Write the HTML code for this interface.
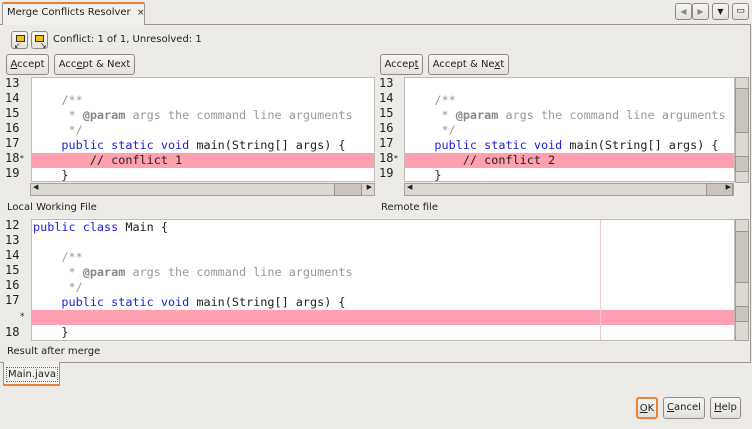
<!DOCTYPE html>
<html><head><meta charset="utf-8"><style>
*{margin:0;padding:0;box-sizing:border-box}
body{width:752px;height:429px;background:#edebe7;font-family:"DejaVu Sans","Liberation Sans",sans-serif;font-size:10px;color:#222;position:relative;overflow:hidden}
.a{position:absolute}
.btn{position:absolute;border:1px solid #8f8b84;border-radius:3px;background:linear-gradient(#f7f6f4,#e4e1dc);font-size:10px;text-align:center;line-height:19px;height:21px}
.ln{position:absolute;font-family:"DejaVu Sans Mono","Liberation Mono",monospace;font-size:12px;color:#222;line-height:15px}
.code{position:absolute;background:#fff;font-family:"DejaVu Sans Mono","Liberation Mono",monospace;font-size:11.8px;line-height:15px;white-space:pre;overflow:hidden}
.code div{height:15px;padding-left:1px}
.c{color:#999}.k{color:#2020e0}.b{font-weight:bold;color:#888}
.hl{background:#fea0b0}
.hs{position:absolute;height:13px;background:#dcd9d4;border:1px solid #a9a59e}
.vs{position:absolute;width:14px;background:#dcd9d4;border:1px solid #a9a59e}
.th{position:absolute;background:#c9c5be;border:1px solid #9b978f}
u{text-decoration:underline}
</style></head><body>
<div class="a" style="left:0;top:24px;width:751px;height:339px;border:1px solid #9c988f;border-left:none"></div>
<div class="a" style="left:2px;top:2px;width:143px;height:23px;background:#f2f0ed;border:1px solid #9c988f;border-bottom:none;border-top:2px solid #e9823a;border-radius:2px 2px 0 0"></div>
<div class="a" style="left:7px;top:7px">Merge Conflicts Resolver&nbsp;&nbsp;<span style="font-size:9px">×</span></div>
<div class="btn" style="left:675px;top:3px;width:17px;height:17px;line-height:15px;font-size:8px;color:#888">◀</div>
<div class="btn" style="left:692px;top:3px;width:17px;height:17px;line-height:15px;font-size:8px;color:#888">▶</div>
<div class="btn" style="left:712px;top:3px;width:17px;height:17px;line-height:15px;font-size:8px">▼</div>
<div class="btn" style="left:732px;top:3px;width:17px;height:17px;line-height:15px;font-size:9px">▭</div>
<div class="btn" style="left:11px;top:31px;width:17px;height:18px"><div class="a" style="left:4px;top:3px;width:9px;height:7px;border:1px solid #333;background:#f0c020"></div><div class="a" style="left:2px;top:11px;font-size:8px;line-height:6px">↙</div></div>
<div class="btn" style="left:31px;top:31px;width:17px;height:18px"><div class="a" style="left:3px;top:3px;width:9px;height:7px;border:1px solid #333;background:#f0c020"></div><div class="a" style="left:8px;top:11px;font-size:8px;line-height:6px">↘</div></div>
<div class="a" style="left:53px;top:34px">Conflict: 1 of 1, Unresolved: 1</div>
<div class="btn" style="left:6px;top:54px;width:43px"><u>A</u>ccept</div>
<div class="btn" style="left:54px;top:54px;width:81px">Acc<u>e</u>pt &amp; Next</div>
<div class="btn" style="left:380px;top:54px;width:43px">Accep<u>t</u></div>
<div class="btn" style="left:428px;top:54px;width:81px">Accept &amp; Ne<u>x</u>t</div>
<div class="ln" style="left:5px;top:76px">13<br>14<br>15<br>16<br>17<br>18<span style="font-size:8px;vertical-align:top">*</span><br>19</div>
<div class="code" style="left:31px;top:77px;width:344px;height:105px;border:1px solid #c0bcb5"><div></div><div class="c">    /**</div><div class="c">     * <span class="b">@param</span> args the command line arguments</div><div class="c">     */</div><div>    <span class="k">public static void</span> main(String[] args) {</div><div class="hl">        // conflict 1</div><div>    }</div></div>
<div class="hs" style="left:30px;top:183px;width:345px"><div class="th" style="left:303px;top:-1px;width:28px;height:13px"></div><div class="a" style="left:2px;top:-1px;font-size:7px">◀</div><div class="a" style="right:2px;top:-1px;font-size:7px">▶</div></div>
<div class="ln" style="left:379px;top:76px">13<br>14<br>15<br>16<br>17<br>18<span style="font-size:8px;vertical-align:top">*</span><br>19</div>
<div class="code" style="left:404px;top:77px;width:331px;height:105px;border:1px solid #c0bcb5"><div></div><div class="c">    /**</div><div class="c">     * <span class="b">@param</span> args the command line arguments</div><div class="c">     */</div><div>    <span class="k">public static void</span> main(String[] args) {</div><div class="hl">        // conflict 2</div><div>    }</div></div>
<div class="vs" style="left:735px;top:77px;height:106px"><div class="th" style="left:-1px;top:10px;width:14px;height:45px"></div><div class="th" style="left:-1px;top:78px;width:14px;height:16px"></div></div>
<div class="hs" style="left:404px;top:183px;width:330px"><div class="th" style="left:301px;top:-1px;width:27px;height:13px"></div><div class="a" style="left:2px;top:-1px;font-size:7px">◀</div><div class="a" style="right:2px;top:-1px;font-size:7px">▶</div></div>
<div class="a" style="left:7px;top:202px">Local Working File</div>
<div class="a" style="left:381px;top:202px">Remote file</div>
<div class="ln" style="left:5px;top:218px">12<br>13<br>14<br>15<br>16<br>17<br>&nbsp;&nbsp;<span style="font-size:9px">*</span><br>18</div>
<div class="code" style="left:31px;top:219px;width:704px;height:122px;border:1px solid #c0bcb5"><div><span class="k">public class</span> Main {</div><div></div><div class="c">    /**</div><div class="c">     * <span class="b">@param</span> args the command line arguments</div><div class="c">     */</div><div>    <span class="k">public static void</span> main(String[] args) {</div><div class="hl"></div><div>    }</div><div class="a" style="left:568px;top:0;width:1px;height:122px;background:#f6c8cf"></div></div>
<div class="vs" style="left:735px;top:219px;height:122px"><div class="th" style="left:-1px;top:11px;width:14px;height:52px"></div><div class="th" style="left:-1px;top:86px;width:14px;height:16px"></div></div>
<div class="a" style="left:7px;top:346px">Result after merge</div>
<div class="a" style="left:3px;top:362px;width:57px;height:24px;background:#f2f0ed;border:1px solid #9c988f;border-top:none;border-bottom:2px solid #e9823a"></div>
<div class="a" style="left:6px;top:367px;border:1px dotted #666;padding:0 1px;line-height:13px">Main.java</div>
<div class="btn" style="left:636px;top:397px;width:22px;height:22px;border:2px solid #e9823a"><u>O</u>K</div>
<div class="btn" style="left:663px;top:397px;width:42px;height:22px"><u>C</u>ancel</div>
<div class="btn" style="left:710px;top:397px;width:31px;height:22px"><u>H</u>elp</div>
</body></html>
